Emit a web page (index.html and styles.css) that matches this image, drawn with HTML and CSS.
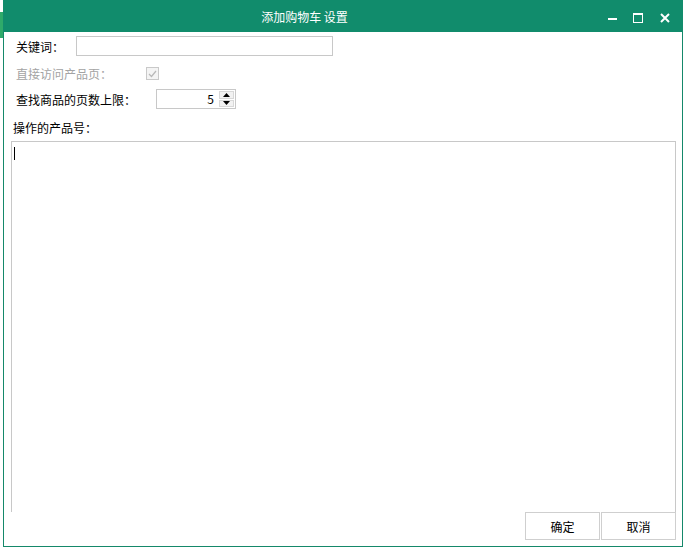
FILE: index.html
```html
<!DOCTYPE html>
<html lang="zh">
<head>
<meta charset="utf-8">
<link rel="stylesheet" href="styles.css">
</head>
<body>
<div class="desktop">
  <div class="desk-strip"><span class="desk-mark"></span></div>
  <div class="window">
    <div class="titlebar">
      <div class="title">添加购物车 设置</div>
      <div class="controls">
        <svg class="ctl ctl-min" width="14" height="14" viewBox="0 0 14 14"><rect x="2" y="7" width="9" height="2" fill="#fff"/></svg>
        <svg class="ctl ctl-max" width="14" height="14" viewBox="0 0 14 14"><rect x="2.5" y="2.5" width="9" height="9" fill="none" stroke="#fff" stroke-width="1"/><rect x="2" y="2" width="10" height="2" fill="#fff"/></svg>
        <svg class="ctl ctl-close" width="14" height="14" viewBox="0 0 14 14"><path d="M3 3 L11 11 M11 3 L3 11" stroke="#fff" stroke-width="2"/></svg>
      </div>
    </div>
    <div class="body">
      <div class="row row-keyword">
        <span class="label">关键词：</span>
        <div class="textbox"></div>
      </div>
      <div class="row row-direct">
        <span class="label disabled">直接访问产品页：</span>
        <span class="checkbox">
          <svg width="9" height="8" viewBox="0 0 9 8"><path d="M1 4 L3.5 6.5 L8 1" fill="none" stroke="#b8b8b8" stroke-width="1.2"/></svg>
        </span>
      </div>
      <div class="row row-pages">
        <span class="label">查找商品的页数上限：</span>
        <div class="spin">
          <span class="spin-value">5</span>
          <span class="spin-btns">
            <span class="spin-btn"><svg width="7" height="4" viewBox="0 0 7 4"><path d="M3.5 0 L7 4 L0 4 Z" fill="#000"/></svg></span>
            <span class="spin-btn"><svg width="7" height="4" viewBox="0 0 7 4"><path d="M0 0 L7 0 L3.5 4 Z" fill="#000"/></svg></span>
          </span>
        </div>
      </div>
      <div class="row row-products">
        <span class="label">操作的产品号：</span>
      </div>
      <div class="textarea"><span class="caret"></span></div>
      <div class="buttons">
        <button class="btn">确定</button>
        <button class="btn">取消</button>
      </div>
    </div>
  </div>
</div>
</body>
</html>
```
FILE: styles.css
```css
* { box-sizing: border-box; }
html, body { margin: 0; padding: 0; background: #fff; }
body {
  font-family: "Noto Sans CJK SC", "DejaVu Sans", sans-serif;
  font-size: 12px;
  color: #000;
  width: 684px;
  height: 549px;
  overflow: hidden;
}
.desktop { display: flex; height: 549px; }
.desk-strip {
  width: 3px;
  display: flex;
  flex-direction: column;
  padding-top: 12px;
}
.desk-mark { display: block; width: 3px; height: 26px; background: #2faa6a; }
.window {
  width: 680px;
  height: 547px;
  border: 1px solid #15886a;
  border-top: none;
  display: flex;
  flex-direction: column;
}
.titlebar {
  height: 32px;
  margin: 0 -1px;
  background: #118c6c;
  display: flex;
  align-items: center;
  color: #fff;
}
.title {
  flex: 1;
  text-align: center;
  font-size: 12px;
}
.controls {
  display: flex;
  align-items: center;
  padding-right: 11px;
  padding-top: 3px;
}
.ctl { display: block; }
.ctl-max { margin-left: 11px; }
.ctl-close { margin-left: 13px; }
.body {
  flex: 1;
  display: flex;
  flex-direction: column;
  padding: 4px 6px 6px 7px;
}
.row { display: flex; align-items: center; }
.label { padding-left: 5px; white-space: nowrap; }
.label.disabled { color: #a3a3a3; }
.row-keyword { height: 20px; }
.row-keyword .label { width: 65px; }
.textbox {
  width: 257px;
  height: 20px;
  border: 1px solid #c8c8c8;
  background: #fff;
}
.row-direct { height: 33px; padding-top: 2px; }
.row-direct .label { width: 135px; }
.checkbox {
  width: 13px;
  height: 13px;
  border: 1px solid #c9c9c9;
  background: #f4f4f4;
  display: flex;
  align-items: center;
  justify-content: center;
}
.row-pages { height: 20px; }
.row-pages .label { width: 145px; }
.spin {
  width: 80px;
  height: 20px;
  border: 1px solid #c8c8c8;
  display: flex;
  align-items: stretch;
}
.spin-value {
  flex: 1;
  text-align: right;
  padding-right: 5px;
  line-height: 18px;
  font-size: 12px;
}
.spin-btns {
  width: 16px;
  display: flex;
  flex-direction: column;
  padding: 1px 1px 1px 0;
  gap: 1px;
}
.spin-btn {
  flex: 1;
  border: 1px solid #d8d8d8;
  background: #f2f2f2;
  display: flex;
  align-items: center;
  justify-content: center;
}
.row-products { height: 32px; padding-top: 5px; }
.row-products .label { padding-left: 2px; }
.textarea {
  flex: 1;
  border: 1px solid #c8c8c8;
  border-bottom: none;
  padding: 5px 2px;
}
.caret { display: block; width: 1px; height: 13px; background: #000; }
.buttons {
  display: flex;
  justify-content: flex-end;
  height: 28px;
}
.btn {
  width: 75px;
  height: 28px;
  border: 1px solid #cfcfcf;
  background: #fff;
  font-family: inherit;
  font-size: 12px;
  color: #000;
  padding: 0;
}
.btn + .btn { margin-left: 1px; }
```
